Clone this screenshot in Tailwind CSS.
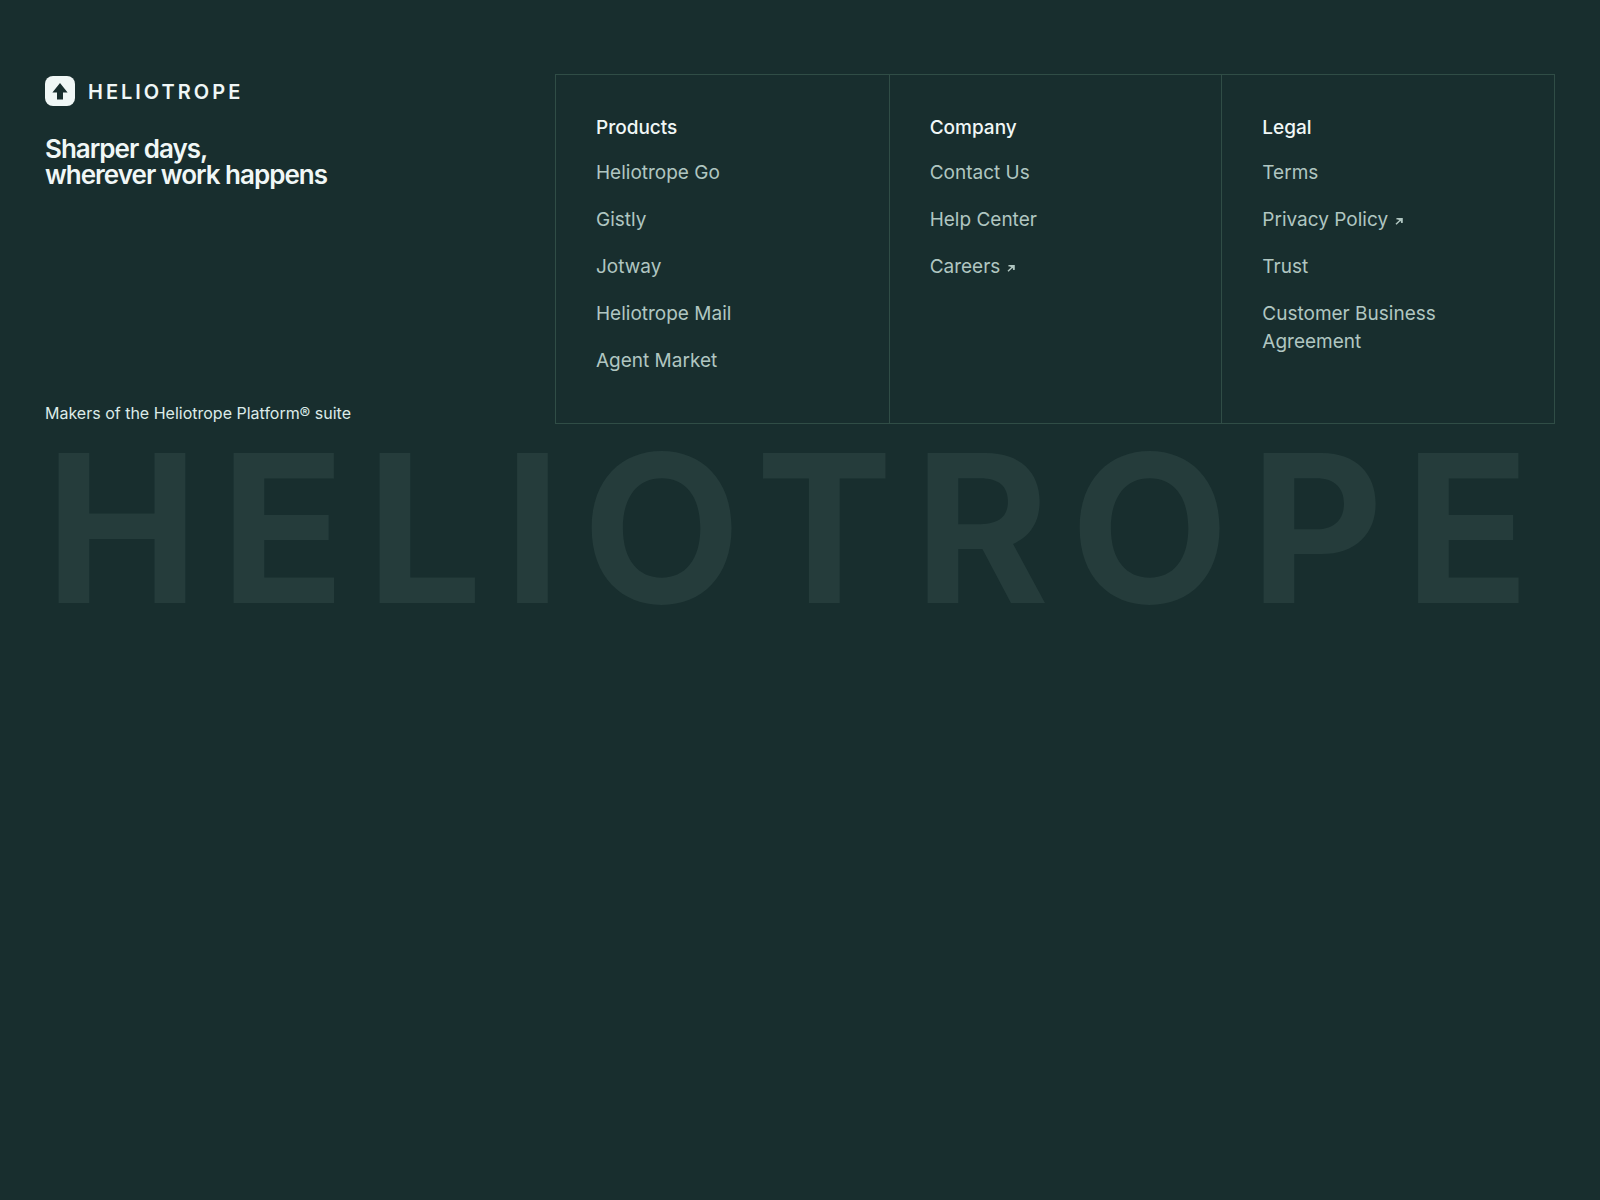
<!DOCTYPE html>
<html lang="en">
<head>
	<meta charset="UTF-8">
	<meta name="viewport" content="width=device-width, initial-scale=1.0">
	<title>Heliotrope</title>
	<script src="https://cdn.jsdelivr.net/npm/@tailwindcss/browser@4"></script>
</head>
	<body class="bg-[#182e2e] font-['Inter',sans-serif] text-[#f0f7f6]">
		<footer class="px-[45px] pt-[74px]">
			<div class="grid grid-cols-[51fr_100fr]">
				<div class="flex flex-col">
					<a href="#" class="mt-[2px] flex items-start gap-[13px]">
						<svg class="size-[30px]" viewBox="0 0 30 30" aria-hidden="true">
							<rect width="30" height="30" rx="8" fill="#f0f7f6" />
							<path d="M15 7 22.600 16.600H18V23.500H12V16.600H7.400Z" fill="#182e2e" />
						</svg>
						<span class="text-[20px] leading-[32px] font-semibold tracking-[3px]">HELIOTROPE</span>
					</a>
					<h2 class="mt-[28px] text-[26px] leading-[26px] font-semibold tracking-[-1px]">Sharper days,<br>wherever work happens</h2>
					<p class="mt-auto text-[16px] leading-[22px] text-[#dcebe8]">Makers of the Heliotrope Platform® suite</p>
				</div>
				<nav class="grid grid-cols-3 border border-[#304d46] text-[19px] leading-[28px] text-[#b0c6c1]">
					<section class="px-[40px] pt-[39px] pb-[48px]">
						<h3 class="font-medium text-[#f0f7f6]">Products</h3>
						<ul class="mt-[17px] flex flex-col gap-[19px]">
							<li><a href="#">Heliotrope Go</a></li>
							<li><a href="#">Gistly</a></li>
							<li><a href="#">Jotway</a></li>
							<li><a href="#">Heliotrope Mail</a></li>
							<li><a href="#">Agent Market</a></li>
						</ul>
					</section>
					<section class="border-l border-[#304d46] px-[40px] pt-[39px] pb-[48px]">
						<h3 class="font-medium text-[#f0f7f6]">Company</h3>
						<ul class="mt-[17px] flex flex-col gap-[19px]">
							<li><a href="#">Contact Us</a></li>
							<li><a href="#">Help Center</a></li>
							<li>
								<a href="#" class="flex items-center gap-[7px]">Careers
									<svg class="mt-[2px] size-[8px]" viewBox="0 0 8 8" aria-hidden="true"><path d="M1.500 1H7.500V6L5.900 4.600" fill="currentColor" /><path d="M1.500 1.700H6.800V6M6.500 2 1 7.200" fill="none" stroke="currentColor" stroke-width="1.500" /></svg>
								</a>
							</li>
						</ul>
					</section>
					<section class="border-l border-[#304d46] px-[40px] pt-[39px] pb-[48px]">
						<h3 class="font-medium text-[#f0f7f6]">Legal</h3>
						<ul class="mt-[17px] flex flex-col gap-[19px]">
							<li><a href="#">Terms</a></li>
							<li>
								<a href="#" class="flex items-center gap-[7px]">Privacy Policy
									<svg class="mt-[2px] size-[8px]" viewBox="0 0 8 8" aria-hidden="true"><path d="M1.500 1H7.500V6L5.900 4.600" fill="currentColor" /><path d="M1.500 1.700H6.800V6M6.500 2 1 7.200" fill="none" stroke="currentColor" stroke-width="1.500" /></svg>
								</a>
							</li>
							<li><a href="#">Trust</a></li>
							<li><a href="#">Customer Business Agreement</a></li>
						</ul>
					</section>
				</nav>
			</div>
			<p class="mt-px text-[206px] leading-[206px] font-bold tracking-[21px] whitespace-nowrap text-[#253c3b]" aria-hidden="true">HELIOTROPE</p>
		</footer>
	</body>
</html>
